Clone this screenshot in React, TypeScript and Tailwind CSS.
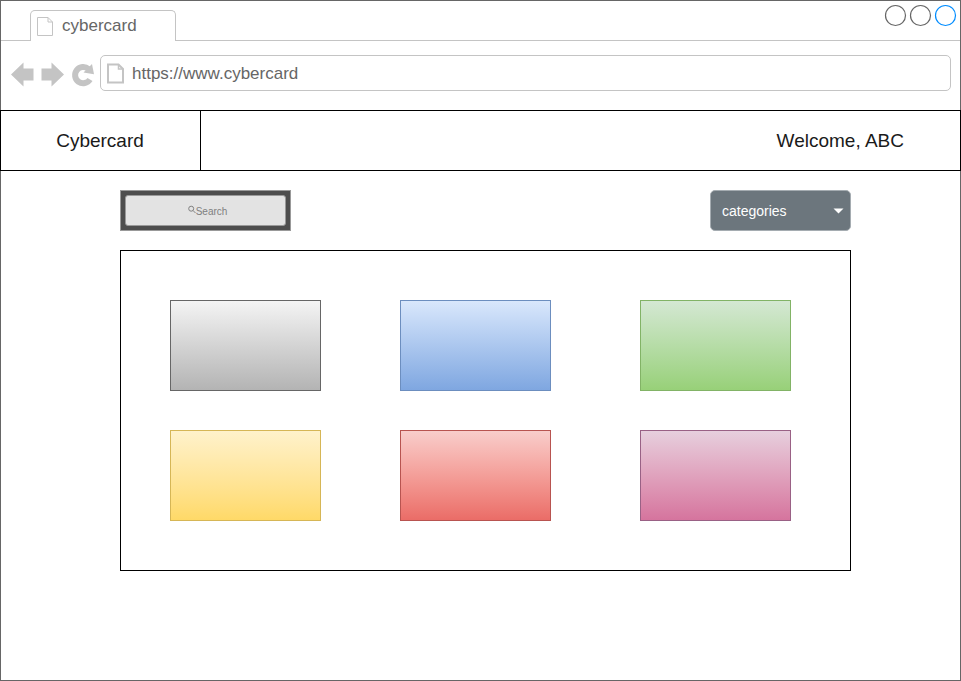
const cards = [
  'border-[#666666] from-[#f5f5f5] to-[#b3b3b3]',
  'border-[#6c8ebf] from-[#dae8fc] to-[#7ea6e0]',
  'border-[#82b366] from-[#d5e8d4] to-[#97d077]',
  'border-[#d6b656] from-[#fff2cc] to-[#ffd966]',
  'border-[#b85450] from-[#f8cecc] to-[#ea6b66]',
  'border-[#996185] from-[#e6d0de] to-[#d5739d]',
];

function TabStrip() {
  return (
    <div className="flex h-10 shrink-0">
      <div className="w-[29px] border-b border-[#c4c4c4]" />
      <div className="mt-[9px] flex w-[146px] rounded-t-[5px] border border-b-0 border-[#c4c4c4]">
        <svg className="ml-1.5 mt-1.5 shrink-0" width="17" height="20" fill="none" stroke="#c4c4c4">
          <path d="M.5 .5H11L15.5 5V18.500H.5ZM11 .5V5H15.500" />
        </svg>
        <span className="ml-2 mt-[3px] text-[17px] leading-6 text-[#666666]">cybercard</span>
      </div>
      <div className="flex flex-1 justify-end border-b border-[#c4c4c4] pr-[3px] pt-[3px]">
        <svg width="73" height="23" fill="none" stroke="#666666" strokeWidth="1.200">
          <circle cx="11.500" cy="11.500" r="10" />
          <circle cx="36.500" cy="11.500" r="10" />
          <circle cx="61.500" cy="11.500" r="10" stroke="#008cff" />
        </svg>
      </div>
    </div>
  );
}

function Toolbar() {
  return (
    <div className="flex h-[69px] shrink-0 pl-[9px] pt-[14px]">
      <svg className="shrink-0" width="90" height="36" fill="#c4c4c4">
        <path d="M1 19.500L13.500 7.500V13.500H23.500V25.500H13.500V31.500Z" />
        <path d="M54 19.500L41.500 7.500V13.500H31.500V25.500H41.500V31.500Z" />
        <path d="M80 24.500A8.100 8.100 0 1 1 78.500 14" fill="none" stroke="#c4c4c4" strokeWidth="6" />
        <path d="M82 9L84 19.300L73.500 17.500Z" />
      </svg>
      <div className="flex h-9 w-[851px] items-center rounded-[5px] border border-[#c4c4c4] pl-[5px]">
        <svg width="19" height="21" fill="none" stroke="#c4c4c4" strokeWidth="2">
          <path d="M2 1.500H12.500L17 6V19.500H2Z" />
          <path d="M12.500 2V6H17" strokeWidth="1.500" />
        </svg>
        <span className="ml-[7px] pt-px text-[17px] leading-6 text-[#666666]">https://www.cybercard</span>
      </div>
    </div>
  );
}

export default function App() {
  return (
    <div className="flex h-[681px] w-[961px] flex-col border border-[#666666] bg-white font-['Liberation_Sans',Arial,sans-serif]">
      <TabStrip />
      <Toolbar />
      <header className="-mx-px flex h-[61px] shrink-0 items-center border border-black text-[19px] text-[#1a1a1a]">
        <div className="flex h-full w-[200px] items-center justify-center border-r border-black pr-px pt-0.5">Cybercard</div>
        <div className="ml-auto pr-14 pt-0.5">Welcome, ABC</div>
      </header>
      <main className="ml-[119px] mt-[19px] w-[731px]">
        <div className="flex justify-between">
          <div className="flex h-[41px] w-[171px] items-center justify-center border border-[#999999] bg-[#4d4d4d]">
            <div className="flex h-[31px] w-[161px] items-center justify-center rounded-[3px] border border-[#999999] bg-[#e3e3e3] pl-1 pt-0.5 text-[10px] text-[#808080]">
              <svg className="mb-1" width="8" height="9" fill="none" stroke="#808080">
                <circle cx="3.200" cy="3.700" r="2.500" />
                <path d="M5 5.500L7.500 8" />
              </svg>
              <span>Search</span>
            </div>
          </div>
          <div className="flex h-[41px] w-[141px] items-center justify-between rounded-[5px] border border-[#a5acb1] bg-[#6c767d] pl-[11px] pr-[6px] text-[14px] text-white">
            <span className="pt-0.5">categories</span>
            <svg width="11" height="6" fill="white">
              <path d="M.5 .5H10.500L5.500 5.500Z" />
            </svg>
          </div>
        </div>
        <section className="mt-[19px] grid h-[321px] grid-cols-[230px_240px_151px] content-start gap-y-[39px] border border-black pl-[49px] pt-[49px]">
          {cards.map((color) => (
            <div key={color} className={`h-[91px] w-[151px] border bg-linear-to-b bg-origin-border ${color}`} />
          ))}
        </section>
      </main>
    </div>
  );
}
